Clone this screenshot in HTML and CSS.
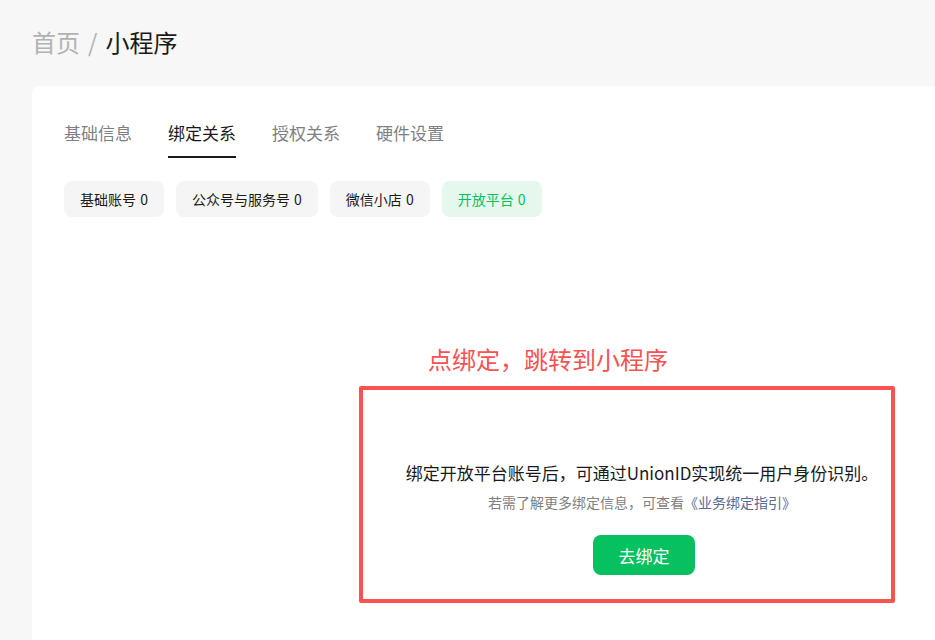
FILE: index.html
```html
<!DOCTYPE html>
<html lang="zh-CN">
<head>
<meta charset="utf-8">
<title>小程序</title>
<link rel="stylesheet" href="styles.css">
</head>
<body>
<div class="page">
  <div class="breadcrumb">
    <span class="crumb-link">首页</span><span class="crumb-sep">/</span><span class="crumb-current">小程序</span>
  </div>
  <div class="card">
    <nav class="tabs">
      <a class="tab">基础信息</a>
      <a class="tab tab-active">绑定关系</a>
      <a class="tab">授权关系</a>
      <a class="tab">硬件设置</a>
    </nav>
    <div class="chips">
      <span class="chip">基础账号 0</span>
      <span class="chip">公众号与服务号 0</span>
      <span class="chip">微信小店 0</span>
      <span class="chip chip-active">开放平台 0</span>
    </div>
    <div class="empty">
      <p class="empty-title">绑定开放平台账号后，可通过UnionID实现统一用户身份识别。</p>
      <p class="empty-desc">若需了解更多绑定信息，可查看<a class="empty-link">《业务绑定指引》</a></p>
      <button class="btn-primary">去绑定</button>
    </div>
  </div>
  <div class="note-label">点绑定，跳转到小程序</div>
  <div class="note-box"></div>
</div>
</body>
</html>
```
FILE: styles.css
```css
html, body {
  margin: 0;
  padding: 0;
  background: #f7f7f7;
  overflow: hidden;
}
body {
  font-family: "Noto Sans CJK SC", "Noto Sans", sans-serif;
  color: #1a1a1a;
  width: 935px;
  height: 640px;
}
.page {
  position: relative;
  padding: 26px 0 0 32px;
  height: 614px;
  overflow: hidden;
}
.breadcrumb {
  font-size: 24px;
  line-height: 32px;
  display: flex;
  align-items: center;
}
.crumb-link { color: #b2b2b2; }
.crumb-sep { color: #b2b2b2; margin: 0 8px 0 8px; }
.crumb-current { color: #1a1a1a; }
.card {
  margin-top: 28px;
  width: 1216px;
  height: 560px;
  box-sizing: border-box;
  background: #fff;
  border-radius: 8px;
  padding: 35px 32px 0;
}
.tabs {
  display: flex;
  gap: 36px;
}
.tab {
  font-size: 17px;
  line-height: 24px;
  color: #7f7f7f;
  padding-bottom: 11px;
  border-bottom: 2px solid transparent;
}
.tab-active {
  color: #1a1a1a;
  border-bottom-color: #1a1a1a;
}
.chips {
  display: flex;
  gap: 12px;
  margin-top: 23px;
}
.chip {
  font-size: 14px;
  line-height: 36px;
  height: 36px;
  padding: 0 16px;
  word-spacing: 1px;
  background: #f5f5f5;
  border-radius: 8px;
  color: #1a1a1a;
}
.chip-active {
  background: #e6f8ee;
  color: #07c160;
}
.empty {
  margin-top: 244px;
  display: flex;
  flex-direction: column;
  align-items: center;
}
.empty-title {
  margin: 0 0 0 4px;
  font-size: 17px;
  line-height: 24px;
  color: #1a1a1a;
}
.empty-desc {
  margin: 7px 0 0 4px;
  font-size: 14px;
  line-height: 20px;
  color: #7f7f7f;
}
.empty-link {
  color: #576b95;
}
.btn-primary {
  margin-top: 23px;
  width: 102px;
  height: 40px;
  border: 0;
  border-radius: 8px;
  background: #07c160;
  color: #fff;
  font-family: inherit;
  font-size: 17px;
  margin-left: 8px;
}
.note-label {
  position: absolute;
  left: 428px;
  top: 342px;
  font-size: 24px;
  line-height: 34px;
  color: #fa5151;
}
.note-box {
  position: absolute;
  left: 359px;
  top: 386px;
  width: 536px;
  height: 217px;
  box-sizing: border-box;
  border: 4px solid #fa5151;
  border-radius: 2px;
}
```
